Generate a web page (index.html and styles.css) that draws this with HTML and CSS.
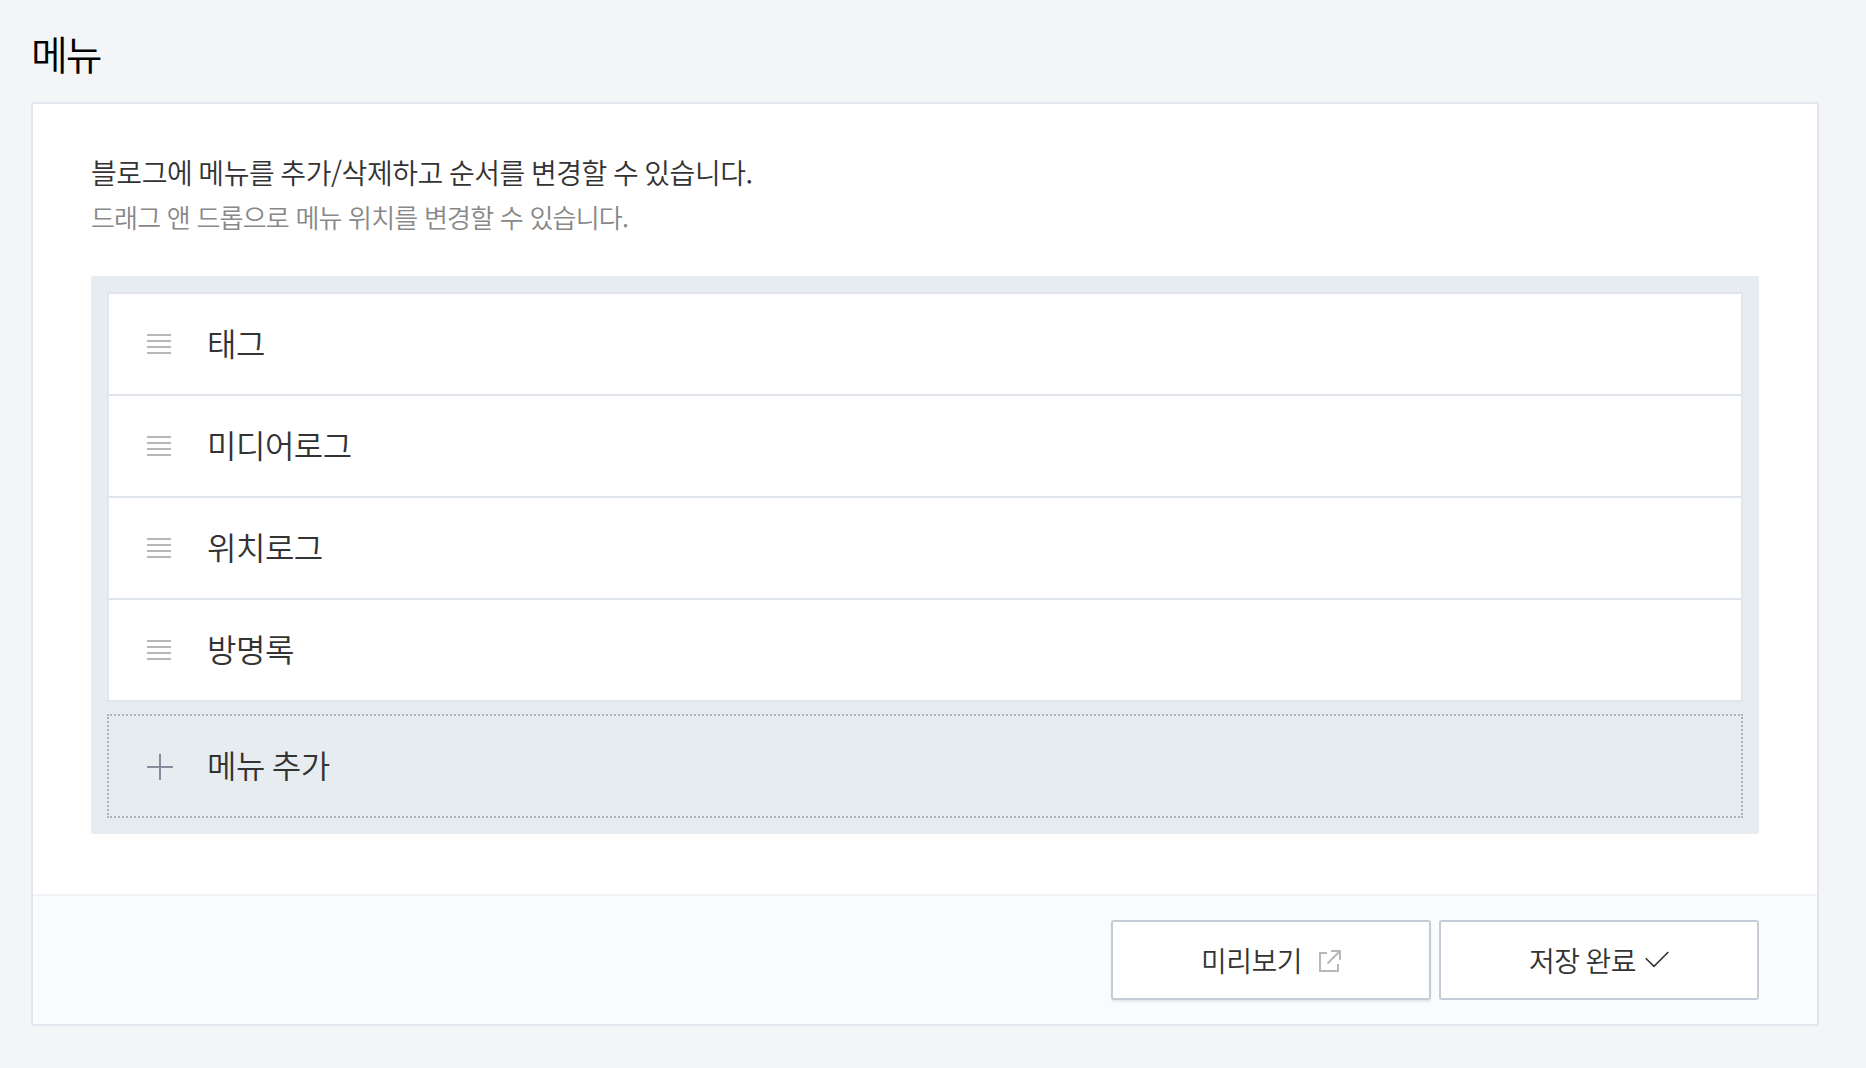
FILE: index.html
```html
<!DOCTYPE html>
<html lang="ko">
<head>
    <meta charset="UTF-8">
    <meta name="viewport" content="width=device-width, initial-scale=1.0">
    <title>메뉴</title>
    <link rel="stylesheet" href="styles.css">
</head>
<body>
    <h2 class="page-title">메뉴</h2>
    <div class="panel">
        <div class="panel-body">
            <p class="desc">블로그에 메뉴를 추가/삭제하고 순서를 변경할 수 있습니다.</p>
            <p class="sub-desc">드래그 앤 드롭으로 메뉴 위치를 변경할 수 있습니다.</p>

            <!-- Menu list -->
            <div class="menu-box">
                <ul class="menu-list">
                    <li class="menu-item"><span class="handle"></span><span class="menu-name">태그</span></li>
                    <li class="menu-item"><span class="handle"></span><span class="menu-name">미디어로그</span></li>
                    <li class="menu-item"><span class="handle"></span><span class="menu-name">위치로그</span></li>
                    <li class="menu-item"><span class="handle"></span><span class="menu-name">방명록</span></li>
                </ul>
                <div class="menu-add">
                    <svg class="icon-plus" width="26" height="26" viewBox="0 0 26 26"><path d="M0 13H26M13 0V26"/></svg>
                    <span class="menu-name">메뉴 추가</span>
                </div>
            </div>
        </div>

        <!-- Buttons -->
        <div class="panel-footer">
            <button class="btn btn-preview">
                <span>미리보기</span>
                <svg class="icon-link" width="22" height="22" viewBox="0 0 22 22"><path d="M8 3H1V21H19V14M12 1H21V10M20.5 1.5L8.5 13.5"/></svg>
            </button>
            <button class="btn btn-save">
                <span>저장 완료</span>
                <svg class="icon-check" width="24" height="17" viewBox="0 0 24 17"><path d="M0.7 7.2L9 15.3L23.3 1"/></svg>
            </button>
        </div>
    </div>
</body>
</html>
```

FILE: styles.css
```css
* {
    box-sizing: border-box;
}
body {
    font-family: "Noto Sans CJK KR", sans-serif;
    font-weight: 350;
    margin: 0;
    padding: 24px 47px 42px 31px;
    background-color: #f3f5f7;
    color: #333;
}
.page-title {
    margin: 0;
    height: 78px;
    font-size: 40px;
    font-weight: 350;
    line-height: 58px;
    letter-spacing: -2px;
    color: #000;
}
.panel {
    border: 2px solid #e0e5ee;
    border-radius: 2px;
    background-color: #fff;
}
.panel-body {
    height: 790px;
    padding: 45px 58px 0;
}
.desc, .sub-desc {
    margin: 0;
    font-size: 28px;
    line-height: 46px;
    letter-spacing: -0.43px;
    word-spacing: -1.4px;
}
.sub-desc {
    font-size: 26px;
    line-height: 44px;
    letter-spacing: -0.8px;
    word-spacing: 0;
    color: #888;
}
.menu-box {
    margin-top: 37px;
    padding: 16px;
    border-radius: 2px;
    background-color: #e7ecf0;
}
.menu-list {
    margin: 0 0 12px;
    padding: 0;
    list-style: none;
    border: 2px solid #e0e5ee;
    background-color: #fff;
}
.menu-item, .menu-add {
    display: flex;
    align-items: center;
    height: 102px;
    padding-left: 38px;
}
.menu-item {
    border-bottom: 2px solid #e0e5ee;
}
.menu-item:last-child {
    height: 100px;
    border-bottom: 0;
}
.menu-add {
    height: 104px;
    border: 2px dotted #abb1bf;
}
.handle {
    width: 24px;
    height: 20px;
    margin-right: 36px;
    background: repeating-linear-gradient(#b8b8b8 0, #b8b8b8 2px, transparent 2px, transparent 6px);
}
.menu-name {
    padding-bottom: 4px;
    font-size: 32px;
    line-height: 48px;
    letter-spacing: -0.5px;
    word-spacing: -1.5px;
}
svg {
    flex: none;
    fill: none;
    stroke-width: 2;
}
.icon-plus {
    margin: 2px 34px 0 0;
    stroke: #848c9d;
}
.panel-footer {
    display: flex;
    justify-content: flex-end;
    gap: 8px;
    height: 130px;
    padding: 24px 58px 0;
    border-top: 2px solid #f1f3f7;
    background-color: #fafbfd;
}
.btn {
    display: flex;
    align-items: center;
    justify-content: center;
    width: 320px;
    height: 80px;
    padding: 0;
    border: 2px solid #c5ccd7;
    border-radius: 3px;
    background-color: #fff;
    color: #333;
    font-family: inherit;
    font-size: 28px;
    font-weight: 350;
    letter-spacing: -0.5px;
    word-spacing: -1.4px;
}
.btn-preview {
    box-shadow: 0 2px 2px rgba(0, 0, 0, 0.08);
}
.icon-link {
    margin: 2px 0 0 17px;
    stroke: #b8b8b8;
}
.icon-check {
    margin: 0 0 2px 9px;
    stroke: #333;
    stroke-width: 1.6;
}
```
